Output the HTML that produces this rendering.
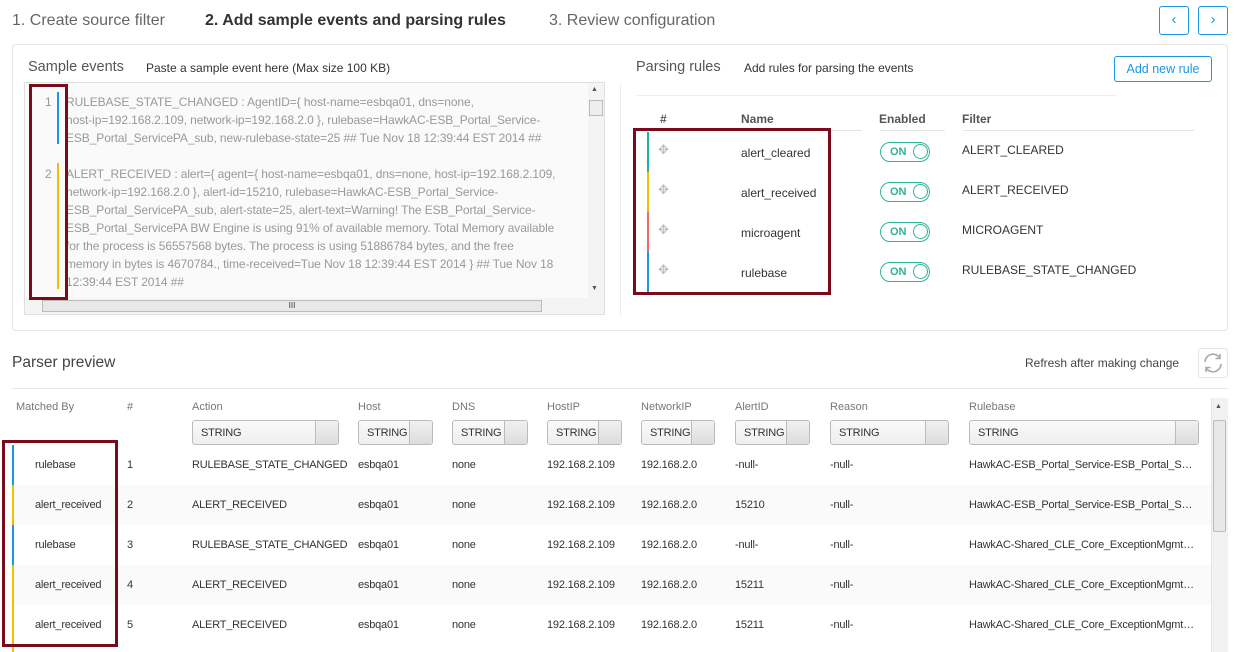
<!DOCTYPE html>
<html><head><meta charset="utf-8">
<style>
*{box-sizing:border-box;margin:0;padding:0}
body{width:1242px;height:652px;overflow:hidden;background:#fff;font-family:"Liberation Sans",sans-serif;color:#333;position:relative}
.a{position:absolute;white-space:nowrap}
.step{font-size:16px;color:#666;top:12px}
.nav{position:absolute;top:6px;width:30px;height:29px;border:1px solid #1a96e6;border-radius:3px;color:#1a96e6;text-align:center;font-size:15px;line-height:26px}
.panel{position:absolute;left:12px;top:44px;width:1216px;height:287px;border:1px solid #e6e6e6;border-radius:4px}
.ta{position:absolute;left:24px;top:82px;width:581px;height:233px;border:1px solid #e0e0e0;background:#fafafa}
.ln{font-size:12px;color:#999;line-height:18px;letter-spacing:-0.1px}
.red{position:absolute;border:3px solid #7b0a1c}
.hdr{font-size:12px;font-weight:bold;color:#555}
.tog{position:absolute;left:880px;width:50px;height:20px;border:1.5px solid #2bb597;border-radius:10px;color:#2bb597;font-size:11px;font-weight:bold}
.tog span{position:absolute;left:9px;top:3px}
.tog i{position:absolute;right:1px;top:1px;width:15px;height:15px;border:1.5px solid #2bb597;border-radius:50%}
.cell{font-size:11px;color:#333;letter-spacing:-0.2px}
.th{font-size:11px;color:#777;top:401px}
.sel{position:absolute;top:420px;height:25px;border:1px solid #bbb;border-radius:3px;background:linear-gradient(#fafafa,#eee);font-size:11px;color:#333;padding:6px 0 0 8px;letter-spacing:-0.2px}
.sel:after{content:"";position:absolute;right:0;top:0;width:22px;height:23px;border-left:1px solid #bbb;background:linear-gradient(#f0f0f0,#ddd);border-radius:0 3px 3px 0}
.row{position:absolute;left:12px;width:1200px;height:40px}
</style></head><body>
<div class="a step" style="left:12px">1. Create source filter</div>
<div class="a step" style="left:205px;font-weight:bold;color:#333">2. Add sample events and parsing rules</div>
<div class="a step" style="left:549px">3. Review configuration</div>
<div class="nav" style="left:1159px">&#8249;</div>
<div class="nav" style="left:1198px">&#8250;</div>

<div class="panel"></div>
<div class="a" style="left:28px;top:59px;font-size:14.5px;color:#555">Sample events</div>
<div class="a" style="left:146px;top:61px;font-size:12px;color:#333">Paste a sample event here (Max size 100 KB)</div>
<div class="ta"></div>
<div class="a" style="left:588px;top:83px;width:16px;height:215px;background:#f4f4f4"></div>
<div class="a" style="left:591px;top:86px;font-size:7px;color:#555">&#9650;</div>
<div class="a" style="left:591px;top:285px;font-size:7px;color:#555">&#9660;</div>
<div class="a" style="left:589px;top:100px;width:14px;height:16px;border:1px solid #bbb;background:#eee"></div>
<div class="a" style="left:25px;top:298px;width:579px;height:16px;background:#f4f4f4"></div>
<div class="a" style="left:42px;top:300px;width:500px;height:12px;border:1px solid #bbb;background:#e8e8e8;font-size:8px;text-align:center;line-height:10px">III</div>
<div class="a ln" style="left:45px;top:93px">1</div>
<div class="a ln" style="left:45px;top:165px">2</div>
<div class="a" style="left:57px;top:92px;width:2px;height:52px;background:#1a96e6"></div>
<div class="a" style="left:57px;top:163px;width:2px;height:126px;background:#f0c000"></div>
<div class="a ln" style="left:66px;top:93px;width:515px;white-space:normal;overflow:hidden">RULEBASE_STATE_CHANGED : AgentID={ host-name=esbqa01, dns=none,<br>host-ip=192.168.2.109, network-ip=192.168.2.0 }, rulebase=HawkAC-ESB_Portal_Service-<br>ESB_Portal_ServicePA_sub, new-rulebase-state=25 ## Tue Nov 18 12:39:44 EST 2014 ##</div>
<div class="a ln" style="left:66px;top:165px;width:515px;white-space:normal;overflow:hidden">ALERT_RECEIVED : alert={ agent={ host-name=esbqa01, dns=none, host-ip=192.168.2.109,<br>network-ip=192.168.2.0 }, alert-id=15210, rulebase=HawkAC-ESB_Portal_Service-<br>ESB_Portal_ServicePA_sub, alert-state=25, alert-text=Warning! The ESB_Portal_Service-<br>ESB_Portal_ServicePA BW Engine is using 91% of available memory. Total Memory available<br>for the process is 56557568 bytes. The process is using 51886784 bytes, and the free<br>memory in bytes is 4670784., time-received=Tue Nov 18 12:39:44 EST 2014 } ## Tue Nov 18<br>12:39:44 EST 2014 ##</div>
<div class="red" style="left:29px;top:84px;width:39px;height:216px"></div>

<div class="a" style="left:620px;top:84px;width:1px;height:232px;background:#eee"></div>
<div class="a" style="left:636px;top:59px;font-size:14.5px;color:#555">Parsing rules</div>
<div class="a" style="left:744px;top:61px;font-size:12px;color:#333">Add rules for parsing the events</div>
<div class="a" style="left:1114px;top:56px;width:98px;height:26px;border:1px solid #1a96e6;border-radius:3px;color:#1a96e6;font-size:12.5px;text-align:center;line-height:24px">Add new rule</div>
<div class="a" style="left:636px;top:95px;width:481px;height:1px;background:#eee"></div>
<div class="a hdr" style="left:660px;top:112px">#</div>
<div class="a hdr" style="left:741px;top:112px">Name</div>
<div class="a hdr" style="left:879px;top:112px">Enabled</div>
<div class="a hdr" style="left:962px;top:112px">Filter</div>
<div class="a" style="left:645px;top:130px;width:217px;height:1px;background:#e5e5e5"></div>
<div class="a" style="left:880px;top:130px;width:65px;height:1px;background:#e5e5e5"></div>
<div class="a" style="left:963px;top:130px;width:231px;height:1px;background:#e5e5e5"></div>
<div class="a" style="left:647px;top:132px;width:2px;height:40px;background:#20b59a"></div>
<div class="a" style="left:647px;top:172px;width:2px;height:40px;background:#f0c000"></div>
<div class="a" style="left:647px;top:212px;width:2px;height:40px;background:#f06a6a"></div>
<div class="a" style="left:647px;top:252px;width:2px;height:40px;background:#1a96e6"></div>
<div class="a" style="left:658px;top:142px;color:#bbb;font-size:13px">&#10021;</div>
<div class="a" style="left:658px;top:182px;color:#bbb;font-size:13px">&#10021;</div>
<div class="a" style="left:658px;top:222px;color:#bbb;font-size:13px">&#10021;</div>
<div class="a" style="left:658px;top:262px;color:#bbb;font-size:13px">&#10021;</div>
<div class="a" style="left:741px;top:146px;font-size:12px">alert_cleared</div>
<div class="a" style="left:741px;top:186px;font-size:12px">alert_received</div>
<div class="a" style="left:741px;top:226px;font-size:12px">microagent</div>
<div class="a" style="left:741px;top:266px;font-size:12px">rulebase</div>
<div class="tog" style="top:142px"><span>ON</span><i></i></div>
<div class="tog" style="top:182px"><span>ON</span><i></i></div>
<div class="tog" style="top:222px"><span>ON</span><i></i></div>
<div class="tog" style="top:262px"><span>ON</span><i></i></div>
<div class="a" style="left:962px;top:143px;font-size:12px">ALERT_CLEARED</div>
<div class="a" style="left:962px;top:183px;font-size:12px">ALERT_RECEIVED</div>
<div class="a" style="left:962px;top:223px;font-size:12px">MICROAGENT</div>
<div class="a" style="left:962px;top:263px;font-size:12px">RULEBASE_STATE_CHANGED</div>
<div class="red" style="left:633px;top:128px;width:198px;height:167px"></div>

<div class="a" style="left:12px;top:354px;font-size:15.5px;color:#444">Parser preview</div>
<div class="a" style="left:1025px;top:356px;font-size:12px;color:#444">Refresh after making change</div>
<div class="a" style="left:1198px;top:348px;width:30px;height:30px;border:1px solid #e5e5e5;border-radius:3px"><svg width="28" height="28" viewBox="0 0 28 28"><path d="M6 13a8 8 0 0 1 14.5-4.5M22 15a8 8 0 0 1-14.5 4.5" fill="none" stroke="#aaa" stroke-width="1.6"/><path d="M21 5v4.5h-4.5M7 23v-4.5h4.5" fill="none" stroke="#aaa" stroke-width="1.6"/></svg></div>
<div class="a" style="left:12px;top:388px;width:1216px;height:1px;background:#e8e8e8"></div>

<div class="a th" style="left:16px">Matched By</div>
<div class="a th" style="left:127px">#</div>
<div class="a th" style="left:192px">Action</div>
<div class="a th" style="left:358px">Host</div>
<div class="a th" style="left:452px">DNS</div>
<div class="a th" style="left:547px">HostIP</div>
<div class="a th" style="left:641px">NetworkIP</div>
<div class="a th" style="left:735px">AlertID</div>
<div class="a th" style="left:830px">Reason</div>
<div class="a th" style="left:969px">Rulebase</div>
<div class="sel" style="left:192px;width:147px">STRING</div>
<div class="sel" style="left:358px;width:75px">STRING</div>
<div class="sel" style="left:452px;width:76px">STRING</div>
<div class="sel" style="left:547px;width:75px">STRING</div>
<div class="sel" style="left:641px;width:74px">STRING</div>
<div class="sel" style="left:735px;width:75px">STRING</div>
<div class="sel" style="left:830px;width:119px">STRING</div>
<div class="sel" style="left:969px;width:230px">STRING</div>

<div class="row" style="top:485px;background:#fafafa"></div>
<div class="row" style="top:565px;background:#fafafa"></div>
<div class="a" style="left:12px;top:445px;width:2px;height:40px;background:#1a96e6"></div>
<div class="a" style="left:12px;top:485px;width:2px;height:40px;background:#f0c000"></div>
<div class="a" style="left:12px;top:525px;width:2px;height:40px;background:#1a96e6"></div>
<div class="a" style="left:12px;top:565px;width:2px;height:87px;background:#f0c000"></div>

<div class="a cell" style="top:459px;left:35px">rulebase</div><div class="a cell" style="top:459px;left:127px">1</div><div class="a cell" style="top:459px;left:192px">RULEBASE_STATE_CHANGED</div><div class="a cell" style="top:459px;left:358px">esbqa01</div><div class="a cell" style="top:459px;left:452px">none</div><div class="a cell" style="top:459px;left:547px">192.168.2.109</div><div class="a cell" style="top:459px;left:641px">192.168.2.0</div><div class="a cell" style="top:459px;left:735px">-null-</div><div class="a cell" style="top:459px;left:830px">-null-</div><div class="a cell" style="top:459px;left:969px;width:228px;overflow:hidden;text-overflow:ellipsis">HawkAC-ESB_Portal_Service-ESB_Portal_ServicePA_sub</div>
<div class="a cell" style="top:499px;left:35px">alert_received</div><div class="a cell" style="top:499px;left:127px">2</div><div class="a cell" style="top:499px;left:192px">ALERT_RECEIVED</div><div class="a cell" style="top:499px;left:358px">esbqa01</div><div class="a cell" style="top:499px;left:452px">none</div><div class="a cell" style="top:499px;left:547px">192.168.2.109</div><div class="a cell" style="top:499px;left:641px">192.168.2.0</div><div class="a cell" style="top:499px;left:735px">15210</div><div class="a cell" style="top:499px;left:830px">-null-</div><div class="a cell" style="top:499px;left:969px;width:228px;overflow:hidden;text-overflow:ellipsis">HawkAC-ESB_Portal_Service-ESB_Portal_ServicePA_sub</div>
<div class="a cell" style="top:539px;left:35px">rulebase</div><div class="a cell" style="top:539px;left:127px">3</div><div class="a cell" style="top:539px;left:192px">RULEBASE_STATE_CHANGED</div><div class="a cell" style="top:539px;left:358px">esbqa01</div><div class="a cell" style="top:539px;left:452px">none</div><div class="a cell" style="top:539px;left:547px">192.168.2.109</div><div class="a cell" style="top:539px;left:641px">192.168.2.0</div><div class="a cell" style="top:539px;left:735px">-null-</div><div class="a cell" style="top:539px;left:830px">-null-</div><div class="a cell" style="top:539px;left:969px;width:228px;overflow:hidden;text-overflow:ellipsis">HawkAC-Shared_CLE_Core_ExceptionMgmt_sub</div>
<div class="a cell" style="top:579px;left:35px">alert_received</div><div class="a cell" style="top:579px;left:127px">4</div><div class="a cell" style="top:579px;left:192px">ALERT_RECEIVED</div><div class="a cell" style="top:579px;left:358px">esbqa01</div><div class="a cell" style="top:579px;left:452px">none</div><div class="a cell" style="top:579px;left:547px">192.168.2.109</div><div class="a cell" style="top:579px;left:641px">192.168.2.0</div><div class="a cell" style="top:579px;left:735px">15211</div><div class="a cell" style="top:579px;left:830px">-null-</div><div class="a cell" style="top:579px;left:969px;width:228px;overflow:hidden;text-overflow:ellipsis">HawkAC-Shared_CLE_Core_ExceptionMgmt_sub</div>
<div class="a cell" style="top:619px;left:35px">alert_received</div><div class="a cell" style="top:619px;left:127px">5</div><div class="a cell" style="top:619px;left:192px">ALERT_RECEIVED</div><div class="a cell" style="top:619px;left:358px">esbqa01</div><div class="a cell" style="top:619px;left:452px">none</div><div class="a cell" style="top:619px;left:547px">192.168.2.109</div><div class="a cell" style="top:619px;left:641px">192.168.2.0</div><div class="a cell" style="top:619px;left:735px">15211</div><div class="a cell" style="top:619px;left:830px">-null-</div><div class="a cell" style="top:619px;left:969px;width:228px;overflow:hidden;text-overflow:ellipsis">HawkAC-Shared_CLE_Core_ExceptionMgmt_sub</div>

<div class="a" style="left:1211px;top:398px;width:17px;height:254px;background:#f2f2f2;border-left:1px solid #e5e5e5"></div>
<div class="a" style="left:1213px;top:420px;width:13px;height:112px;border:1px solid #bbb;border-radius:2px;background:#e8e8e8"></div>
<div class="a" style="left:1215px;top:403px;font-size:7px;color:#555">&#9650;</div>
<div class="red" style="left:2px;top:440px;width:116px;height:207px"></div>
</body></html>
